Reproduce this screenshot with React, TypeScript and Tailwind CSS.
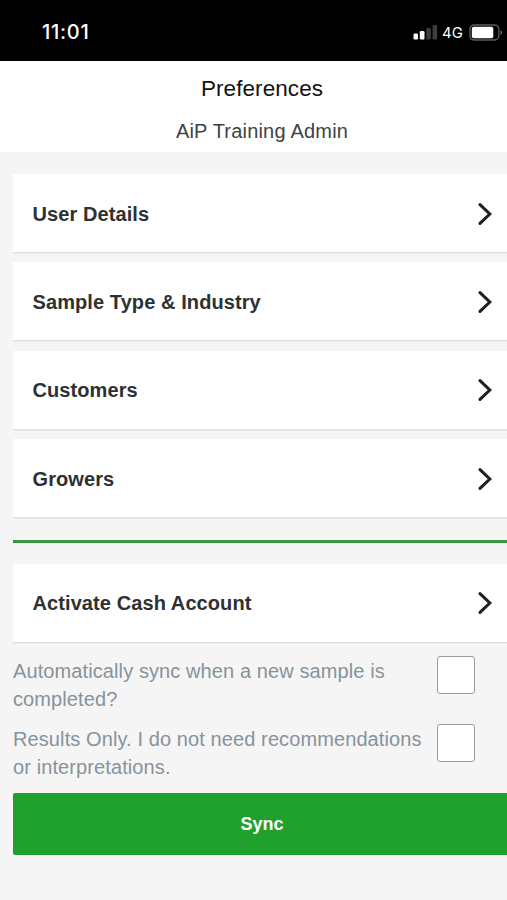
import React, { useState } from 'react';

const menuItems = ['User Details', 'Sample Type & Industry', 'Customers', 'Growers'];

const StatusBar = () => {
  return <div className="h-[61px] bg-black text-white flex items-center justify-between pl-[42px] pr-[4px] pt-[3px]">
      <span className="font-['Inter',sans-serif] font-medium text-[20px] leading-6 tracking-[0.7px]">11:01</span>
      <div className="flex items-center">
        <svg width="25" height="16" viewBox="0 0 25 16">
          <rect x="0.5" y="9.5" width="4.5" height="6" rx="1.2" fill="#fff" />
          <rect x="6.8" y="7" width="4.7" height="8.5" rx="1.2" fill="#fff" />
          <rect x="13.3" y="4" width="4.5" height="11.5" rx="1.2" fill="#3d3d3d" />
          <rect x="19.6" y="1" width="4.5" height="14.5" rx="1.2" fill="#3d3d3d" />
        </svg>
        <span className="font-['Inter',sans-serif] text-[15px] leading-5 ml-[4px] w-[21px] pt-px whitespace-nowrap">4G</span>
        <svg className="ml-[6px]" width="34" height="17" viewBox="0 0 34 17">
          <rect x="0.9" y="1" width="29" height="15" rx="4.2" fill="none" stroke="#5c5c5c" strokeWidth="1.3" />
          <rect x="2.8" y="2.7" width="21.5" height="11.6" rx="2" fill="#fff" />
          <path d="M31.6 6.2c2 .9 2 3.7 0 4.6z" fill="#777" />
        </svg>
      </div>
    </div>;
};

const MenuRow = ({ label }: { label: string }) => {
  return <button type="button" className="w-full h-[78px] bg-white pl-[19.5px] pr-[14.5px] pt-px flex items-center justify-between text-left shadow-[0_1.5px_0_0_#dedfe0]">
      <span className="font-bold text-[20px] leading-7 tracking-[0.09px] text-[#2e3133]">{label}</span>
      <svg width="16" height="24" viewBox="0 0 16 24" fill="none" stroke="#1f2123" strokeWidth="3.1" strokeLinecap="round" strokeLinejoin="miter">
        <path d="M3 2.6L12.8 12L3 21.4" />
      </svg>
    </button>;
};

type CheckRowProps = {
  label: string;
  checked: boolean;
  onChange: (checked: boolean) => void;
};

const CheckRow = ({ label, checked, onChange }: CheckRowProps) => {
  return <label className="flex items-start justify-between pr-[32px] h-[68px]">
      <span className="w-[418px] text-[20px] leading-7 tracking-[0.1px] text-[#87939c]">{label}</span>
      <input
        type="checkbox"
        checked={checked}
        onChange={e => onChange(e.target.checked)}
        className="appearance-none shrink-0 w-[38px] h-[38px] -mt-[1px] bg-white border border-[#979da3] rounded-[3px] checked:bg-[#22a12e]"
      />
    </label>;
};

const App = () => {
  const [autoSync, setAutoSync] = useState(false);
  const [resultsOnly, setResultsOnly] = useState(false);

  return <div className="w-full h-[900px] overflow-hidden bg-[#f5f5f5] font-['Liberation_Sans',Arial,sans-serif]">
      <StatusBar />
      <header className="h-[91px] bg-white text-center pl-[17px] pt-[14px]">
        <h1 className="text-[22.5px] leading-7 tracking-[0.08px] text-[#111]">Preferences</h1>
        <p className="mt-[14px] text-[20px] leading-7 tracking-[0.2px] text-[#404244]">AiP Training Admin</p>
      </header>
      <main className="pl-[13px] pt-[22px]">
        <div className="flex flex-col gap-[10.4px]">
          {menuItems.map(item => <MenuRow key={item} label={item} />)}
        </div>
        <hr className="mt-[22.8px] mb-[20.8px] border-0 h-[3px] bg-[#37973f]" />
        <MenuRow label="Activate Cash Account" />
        <div className="mt-[15px]">
          <CheckRow
            label="Automatically sync when a new sample is completed?"
            checked={autoSync}
            onChange={setAutoSync}
          />
          <CheckRow
            label="Results Only. I do not need recommendations or interpretations."
            checked={resultsOnly}
            onChange={setResultsOnly}
          />
        </div>
        <button type="button" className="w-full h-[62px] bg-[#20a12e] rounded-l-[2px] text-white font-bold text-[18px] leading-7 flex items-center justify-center pl-[4px] pt-px">
          Sync
        </button>
      </main>
    </div>;
};
export default App;
